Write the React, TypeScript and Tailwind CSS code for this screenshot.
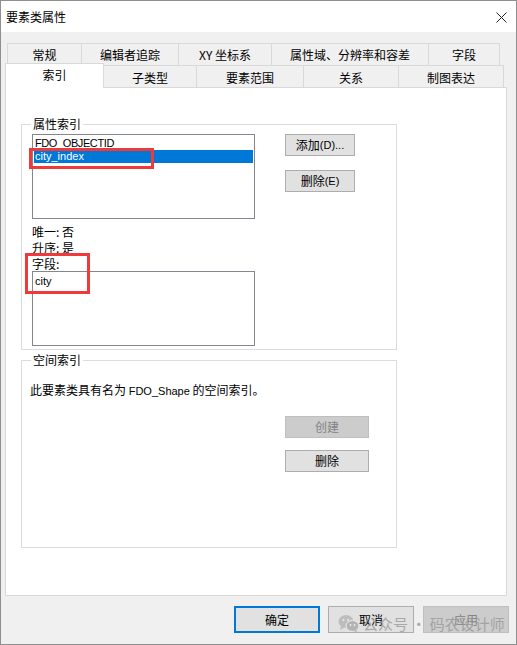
import React from "react";

const cjk = "font-['Microsoft_YaHei_UI','Noto_Sans_CJK_SC','Noto_Sans',sans-serif]";

const row1 = [
  { name: "常规", w: "w-[75px]" },
  { name: "编辑者追踪", w: "w-[98px]" },
  { name: "XY 坐标系", w: "w-[94px]" },
  { name: "属性域、分辨率和容差", w: "w-[158px]" },
  { name: "字段", w: "w-[72px]" },
];

const row2 = [
  { name: "子类型", w: "w-[93px]" },
  { name: "要素范围", w: "w-[107px]" },
  { name: "关系", w: "w-[95px]" },
  { name: "制图表达", w: "w-[105px]" },
];

function Btn({
  children,
  className = "",
  disabled = false,
}: {
  children: React.ReactNode;
  className?: string;
  disabled?: boolean;
}) {
  return (
    <div
      className={
        "flex items-center justify-center text-[12px] leading-none " +
        (disabled
          ? "bg-[#cccccc] border border-[#bfbfbf] text-[#838383] "
          : "bg-[#e1e1e1] border border-[#adadad] text-black ") +
        className
      }
    >
      {children}
    </div>
  );
}

function Group({
  label,
  className = "",
  children,
}: {
  label: string;
  className?: string;
  children: React.ReactNode;
}) {
  return (
    <div className={"relative border border-[#dcdcdc] " + className}>
      {/* legend sits on the top border */}
      <span className="absolute -top-[9px] left-[9px] bg-white px-[2px] text-[12px] leading-[16px] text-black">
        {label}
      </span>
      {children}
    </div>
  );
}

function WeChatIcon() {
  return (
    <svg width="22" height="19" viewBox="0 0 22 19">
      <ellipse cx="8" cy="7.5" rx="7.5" ry="6.5" fill="#b5b5b5" />
      <path d="M3 12 L2 16 L6.5 13.5 Z" fill="#b5b5b5" />
      <ellipse cx="14.5" cy="12" rx="6.5" ry="5.5" fill="#a9a9a9" stroke="#eeeeee" strokeWidth="1" />
      <path d="M18 16 L19.5 18.5 L15.5 17 Z" fill="#a9a9a9" />
      <circle cx="5.5" cy="6" r="1" fill="#eeeeee" />
      <circle cx="10" cy="6" r="1" fill="#eeeeee" />
      <circle cx="12.5" cy="11" r="0.9" fill="#eeeeee" />
      <circle cx="16.5" cy="11" r="0.9" fill="#eeeeee" />
    </svg>
  );
}

export default function App() {
  return (
    <div className={"relative w-[517px] h-[645px] bg-[#f0f0f0] border border-[#8f8f8f] overflow-hidden text-black " + cjk}>
      {/* Title bar */}
      <div className="h-[31px] bg-white flex items-center justify-between pl-[5px] pr-[9px]">
        <span className="text-[12px] leading-none">要素类属性</span>
        <svg width="11" height="11" viewBox="0 0 11 11" className="mt-[1px]">
          <path d="M0.5 0.5 L10.5 10.5 M10.5 0.5 L0.5 10.5" stroke="#222" strokeWidth="1" />
        </svg>
      </div>

      {/* Tabs */}
      <div className="mt-[11px] flex flex-col">
        <div className="ml-[6px] flex h-[22px]">
          {row1.map((t) => (
            <div
              key={t.name}
              className={`${t.w} h-[22px] flex items-center justify-center border border-b-0 border-[#d9d9d9] -ml-px first:ml-0 text-[12px] leading-none`}
            >
              {t.name}
            </div>
          ))}
        </div>
        <div className="ml-[4px] flex h-[22px] items-end">
          <div className="relative z-10 w-[99px] h-[25px] -mb-[1px] bg-white border border-b-0 border-[#d9d9d9] flex items-start justify-center pt-[4px] text-[12px] leading-[14px]">
            索引
          </div>
          {row2.map((t) => (
            <div
              key={t.name}
              className={`${t.w} h-[22px] flex items-center justify-center border border-b-0 border-l-0 border-[#d9d9d9] text-[12px] leading-none pt-[2px]`}
            >
              {t.name}
            </div>
          ))}
        </div>

        {/* Panel */}
        <div className="ml-[4px] w-[502px] h-[509px] bg-white border border-[#d9d9d9] pt-[36px] pl-[15px]">
          <Group label="属性索引" className="w-[376px] h-[226px] pl-[10px] pt-[9px]">
            <div className="flex">
              <div className="w-[223px] h-[85px] border border-[#828790] bg-white pt-[2px] px-px font-['Liberation_Sans','Noto_Sans',sans-serif] text-[11px]">
                <div className="h-[13px] leading-[13px] pl-[1px] tracking-[-0.4px]">FDO_OBJECTID</div>
                <div className="h-[13px] leading-[13px] pl-[1px] bg-[#0078d7] text-white">city_index</div>
              </div>
              <div className="ml-[30px] flex flex-col gap-[14px]">
                <Btn className="w-[70px] h-[22px]">
                  添加<span className="font-['Liberation_Sans',sans-serif] text-[11px]">(D)...</span>
                </Btn>
                <Btn className="w-[70px] h-[22px]">
                  删除<span className="font-['Liberation_Sans',sans-serif] text-[11px]">(E)</span>
                </Btn>
              </div>
            </div>
            <div className="mt-[5px] text-[12px] leading-[16px]">
              <div>唯一: 否</div>
              <div>升序: 是</div>
              <div className="-mb-px">字段:</div>
            </div>
            <div className="w-[223px] h-[75px] border border-[#828790] bg-white pt-[3px] pl-[2px] font-['Liberation_Sans','Noto_Sans',sans-serif] text-[11px] leading-[13px]">
              city
            </div>
          </Group>

          <Group label="空间索引" className="mt-[10px] w-[376px] h-[188px] pl-[8px] pt-[21px]">
            <div className="text-[12px] leading-[16px]">
              此要素类具有名为 <span className="font-['Liberation_Sans',sans-serif] text-[11px]">FDO_Shape</span> 的空间索引。
            </div>
            <div className="ml-[255px] mt-[17px] flex flex-col gap-[12px]">
              <Btn disabled className="w-[84px] h-[22px]">创建</Btn>
              <Btn className="w-[84px] h-[22px]">删除</Btn>
            </div>
          </Group>
        </div>

        {/* Dialog buttons */}
        <div className="mt-[10px] flex justify-end pr-[7px]">
          <Btn className="w-[86px] h-[27px] !border-2 !border-[#0078d7]">确定</Btn>
          <Btn className="ml-[8px] w-[86px] h-[27px]">取消</Btn>
          <Btn disabled className="ml-[9px] w-[86px] h-[27px]">应用</Btn>
        </div>
      </div>

      {/* Annotation boxes */}
      <div className="absolute left-[28px] top-[147px] w-[125px] h-[21px] border-[3px] border-[#f03a3a]" />
      <div className="absolute left-[24px] top-[252px] w-[65px] h-[41px] border-[3px] border-[#f03a3a]" />

      {/* Watermark */}
      <div className="absolute left-[337px] top-[613px] flex items-center gap-[3px] opacity-80 pointer-events-none whitespace-nowrap">
        <WeChatIcon />
        <span className="text-[15px] leading-none text-[#9a9a9a] whitespace-nowrap">公众号 · 码农设计师</span>
      </div>
    </div>
  );
}
